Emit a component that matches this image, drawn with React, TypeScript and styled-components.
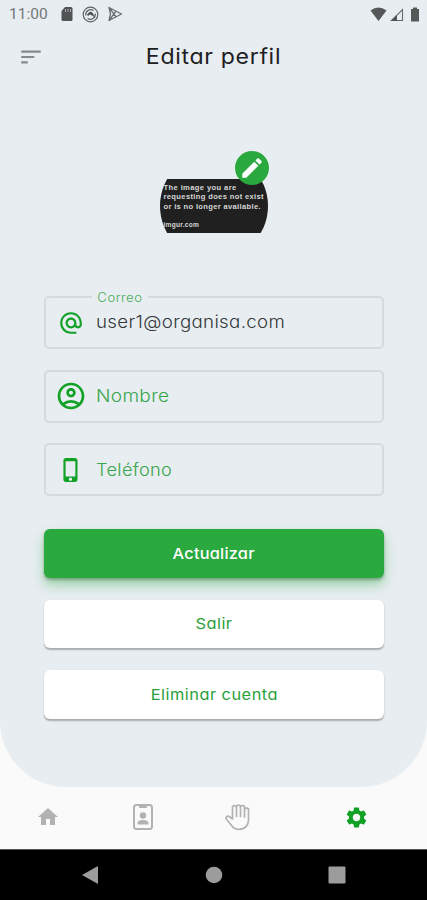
import React from "react";
import styled, { createGlobalStyle, css } from "styled-components";
import {
  MdAlternateEmail,
  MdEdit,
  MdHome,
  MdOutlineAccountCircle,
  MdPhoneIphone,
  MdSettings,
  MdSort,
} from "react-icons/md";

const GlobalStyle = createGlobalStyle`
  * { box-sizing: border-box; }
  body { margin: 0; background: #fafafa; }
  button { font: inherit; border: 0; padding: 0; background: none; }
`;

const green = "#2aa93f";
const iconGreen = "#11a125";

const Screen = styled.div`
  display: flex;
  flex-direction: column;
  width: 427px;
  height: 900px;
  overflow: hidden;
  background: #fafafa;
  font-family: Inter, "Open Sans", sans-serif;
  font-feature-settings: "cv11" 1;
`;

const Panel = styled.main`
  display: flex;
  flex-direction: column;
  height: 787px;
  background: #e7edf0;
  border-radius: 0 0 66px 66px;
`;

const StatusBar = styled.div`
  display: flex;
  align-items: center;
  height: 28px;
  padding: 0 4px 0 9px;
  color: #606365;
`;

const Clock = styled.span`
  width: 51px;
  font: 400 15.5px/28px Roboto, sans-serif;
  color: #74787a;
`;

const StatusGroup = styled.div<{ $end?: boolean }>`
  display: flex;
  align-items: center;
  gap: ${(p) => (p.$end ? 3 : 8)}px;
  margin-left: ${(p) => (p.$end ? "auto" : "0")};
  svg { display: block; }
`;

const AppBar = styled.header`
  display: grid;
  grid-template-columns: 62px 1fr 62px;
  align-items: center;
  height: 58px;
`;

const MenuButton = styled.button`
  display: flex;
  justify-content: center;
  color: #85898b;
  svg { width: 26px; height: 26px; }
`;

const Title = styled.h1`
  margin: 0;
  text-align: center;
  font-size: 21px;
  font-weight: 400;
  letter-spacing: 0.6px;
  line-height: 28px;
  color: #1d2022;
  transform: scaleX(1.1);
`;

const Avatar = styled.div`
  position: relative;
  width: 108px;
  height: 108px;
  margin: 66px auto 0;
`;

const AvatarClip = styled.div`
  display: flex;
  align-items: center;
  width: 108px;
  height: 108px;
  border-radius: 50%;
  overflow: hidden;
`;

const MissingImage = styled.div`
  flex: none;
  width: 108px;
  height: 54px;
  padding: 4px 0 0 4px;
  background: #202020;
  color: #d6d6d6;
  font: 700 7.6px/9.4px "Liberation Sans", sans-serif;
  white-space: pre;
`;

const ImageLine = styled.div<{ $spacing: number }>`
  height: 9.4px;
  letter-spacing: ${(p) => p.$spacing}px;
`;

const ImageSource = styled.div`
  margin-top: 9px;
  font-size: 6.6px;
  letter-spacing: 0.25px;
`;

const EditBadge = styled.button`
  position: absolute;
  top: -1px;
  left: 75px;
  display: grid;
  place-items: center;
  width: 34px;
  height: 34px;
  border-radius: 50%;
  background: ${green};
  color: #fff;
  svg { width: 26px; height: 26px; }
`;

const Form = styled.form`
  display: flex;
  flex-direction: column;
  width: 340px;
  margin: 36px 0 0 44px;
`;

const Field = styled.div`
  position: relative;
  display: flex;
  align-items: center;
  height: 53px;
  margin-bottom: 20.7px;
  border: 2px solid #d4dadd;
  border-radius: 5px;
`;

const FieldIcon = styled.span<{ $size: number }>`
  display: flex;
  justify-content: center;
  width: 50px;
  color: ${iconGreen};
  svg { width: ${(p) => p.$size}px; height: ${(p) => p.$size}px; }
`;

const FieldText = styled.span<{ $stretch: number; $filled?: boolean }>`
  font-size: 17px;
  font-weight: 300;
  line-height: 24px;
  letter-spacing: 0.3px;
  color: ${(p) => (p.$filled ? "#34383b" : "#39a54c")};
  transform: translateY(${(p) => (p.$filled ? -1.5 : -0.5)}px) scaleX(${(p) => p.$stretch});
  transform-origin: left center;
`;

const FloatingLabel = styled.label`
  position: absolute;
  top: -9px;
  left: 46px;
  padding: 0 5px;
  background: #e7edf0;
  color: #4aad5a;
  font-size: 12.4px;
  font-weight: 300;
  line-height: 16px;
  letter-spacing: 0.5px;
  transform: translateY(0.5px) scaleX(1.06);
  transform-origin: left center;
`;

const Actions = styled.div`
  display: flex;
  flex-direction: column;
  gap: 22px;
  margin-top: 12px;
`;

const Action = styled.button<{ $primary?: boolean }>`
  height: 48.5px;
  border-radius: 6px;
  font-size: 15px;
  line-height: 47px;
  letter-spacing: ${(p) => (p.$primary ? 0.2 : 0.45)}px;
  ${(p) =>
    p.$primary
      ? css`
          background: ${green};
          color: #fff;
          font-weight: 500;
          box-shadow: 0 2px 3px rgba(50, 90, 60, 0.4), 0 7px 12px rgba(42, 169, 63, 0.4);
        `
      : css`
          background: #fff;
          color: #2a9f3b;
          font-weight: 400;
          box-shadow: 0 1.5px 1.5px rgba(80, 84, 86, 0.42);
        `}
`;

const ActionLabel = styled.span`
  display: inline-block;
  transform: scaleX(1.09);
`;

const TabBar = styled.nav`
  display: grid;
  grid-template-columns: 95px 95px 95px 142px;
  align-items: center;
  height: 62px;
  padding-bottom: 2px;
`;

const Tab = styled.button<{ $active?: boolean }>`
  display: flex;
  justify-content: center;
  color: ${(p) => (p.$active ? iconGreen : "#b2b2b2")};
`;

const SystemBar = styled.footer`
  display: grid;
  grid-template-columns: 180px 68px 177px;
  align-items: center;
  justify-items: center;
  height: 51px;
  border-top: 1px solid #555;
  background: #000;
  svg { display: block; fill: #9c9c9c; }
`;

function SdCardIcon() {
  return (
    <svg width="14" height="16" viewBox="0 0 14 16">
      <path fill="#505354" d="M5 1h6q1.500 0 1.500 1.500v11q0 1.500-1.500 1.500H3q-1.500 0-1.500-1.500V5z" />
      <path d="M5.500 3v3M8 3v3M10.500 3v3" stroke="#a9adaf" />
    </svg>
  );
}

function SyncIcon() {
  return (
    <svg width="17" height="17" viewBox="0 0 17 17" fill="none" stroke="#5f6365">
      <circle cx="8.500" cy="8.500" r="7.300" strokeWidth="1.200" />
      <path d="M3.800 9.500A5 5 0 0 1 11.500 4.500M13.200 7.500A5 5 0 0 1 5.500 12.500" strokeWidth="1.200" />
      <path fill="#505354" stroke="none" d="M5 8.500 8 5.500l2.500 1 2.500 5-3-2-2-1-2 1.500z" />
    </svg>
  );
}

function PlayIcon() {
  return (
    <svg width="16" height="16" viewBox="0 0 16 16" fill="none" stroke="#6a6e70" strokeWidth="1.300">
      <path d="M2 1.500 14.500 8 2 14.500l1.500-6.500zM2 1.500 9 10.800M2 14.500 9 5.200" strokeLinejoin="round" />
    </svg>
  );
}

function WifiIcon() {
  return (
    <svg width="17" height="15" viewBox="0 0 17 15">
      <path fill="#555859" d="M.5 3.500q8-6 16 0l-8 10.500z" />
    </svg>
  );
}

function SignalIcon() {
  return (
    <svg width="14" height="15" viewBox="0 0 14 15">
      <path d="M1.500 13.500h11v-11z" fill="none" stroke="#666a6c" strokeWidth="1.100" />
      <path d="M1 14h6V8z" fill="#505354" />
    </svg>
  );
}

function BatteryIcon() {
  return (
    <svg width="16" height="15" viewBox="0 0 16 15">
      <path fill="#555859" d="M6 .5h4V2h2v12.500H4V2h2z" />
    </svg>
  );
}

function BadgeIcon() {
  return (
    <svg width="22" height="28" viewBox="0 0 22 28" fill="currentColor">
      <rect x="2" y="2" width="18" height="24" rx="2.500" fill="none" stroke="currentColor" strokeWidth="2" />
      <path d="M7 2h8v2q0 1-1 1H8Q7 5 7 4z" />
      <circle cx="11" cy="12.500" r="3.200" />
      <path d="M5.500 21.500V20q0-3 5.500-3t5.500 3v1.500z" />
    </svg>
  );
}

function HandIcon() {
  return (
    <svg
      width="28"
      height="28"
      viewBox="0 0 28 28"
      fill="none"
      stroke="currentColor"
      strokeWidth="1.700"
      strokeLinecap="round"
      strokeLinejoin="round"
    >
      <path d="M8.500 14V5.500a2 2 0 0 1 4-1.500a2 2 0 0 1 4 0a2 2 0 0 1 4 1.200v1.300a2 2 0 0 1 4 1.300V17c0 5.500-3.500 9.300-9.300 9.300-3.800 0-6.300-1.400-8-4.300l-4.800-5.700c-1.300-1.800.8-3.800 2.800-2.800l3.300 2.500z" />
      <path d="M12.500 4V13.500M16.500 4V13.500M20.500 6.500V14" />
    </svg>
  );
}

export default function App() {
  return (
    <>
      <GlobalStyle />
      <Screen>
        <Panel>
          <StatusBar>
            <Clock>11:00</Clock>
            <StatusGroup>
              <SdCardIcon />
              <SyncIcon />
              <PlayIcon />
            </StatusGroup>
            <StatusGroup $end>
              <WifiIcon />
              <SignalIcon />
              <BatteryIcon />
            </StatusGroup>
          </StatusBar>
          <AppBar>
            <MenuButton aria-label="Menú"><MdSort /></MenuButton>
            <Title>Editar perfil</Title>
          </AppBar>
          <Avatar>
            <AvatarClip>
              <MissingImage>
                <ImageLine $spacing={0.38}>The image you are</ImageLine>
                <ImageLine $spacing={0.34}>requesting does not exist</ImageLine>
                <ImageLine $spacing={0.32}>or is no longer available.</ImageLine>
                <ImageSource>imgur.com</ImageSource>
              </MissingImage>
            </AvatarClip>
            <EditBadge type="button" aria-label="Editar"><MdEdit /></EditBadge>
          </Avatar>
          <Form>
            <Field>
              <FloatingLabel>Correo</FloatingLabel>
              <FieldIcon $size={26}><MdAlternateEmail /></FieldIcon>
              <FieldText $filled $stretch={1.1}>user1@organisa.com</FieldText>
            </Field>
            <Field>
              <FieldIcon $size={32}><MdOutlineAccountCircle /></FieldIcon>
              <FieldText $stretch={1.12}>Nombre</FieldText>
            </Field>
            <Field>
              <FieldIcon $size={26}><MdPhoneIphone /></FieldIcon>
              <FieldText $stretch={1.07}>Teléfono</FieldText>
            </Field>
            <Actions>
              <Action type="button" $primary><ActionLabel>Actualizar</ActionLabel></Action>
              <Action type="button"><ActionLabel>Salir</ActionLabel></Action>
              <Action type="button"><ActionLabel>Eliminar cuenta</ActionLabel></Action>
            </Actions>
          </Form>
        </Panel>
        <TabBar>
          <Tab aria-label="Inicio"><MdHome size={24} /></Tab>
          <Tab aria-label="Credencial"><BadgeIcon /></Tab>
          <Tab aria-label="Ayuda"><HandIcon /></Tab>
          <Tab aria-label="Ajustes" $active><MdSettings size={25} /></Tab>
        </TabBar>
        <SystemBar>
          <svg width="18" height="20" viewBox="0 0 18 20"><path d="M1 10 17 1v18z" /></svg>
          <svg width="18" height="18" viewBox="0 0 18 18"><circle cx="9" cy="9" r="8.300" /></svg>
          <svg width="18" height="18" viewBox="0 0 18 18"><rect x=".5" y=".5" width="17" height="17" rx="1" /></svg>
        </SystemBar>
      </Screen>
    </>
  );
}
